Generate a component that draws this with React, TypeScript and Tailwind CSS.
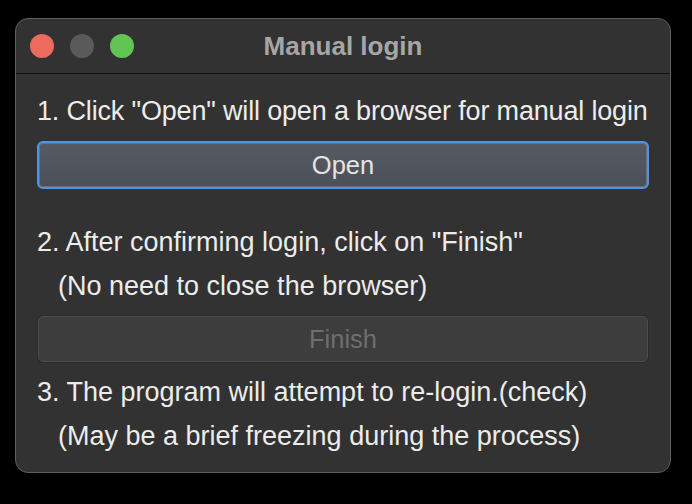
import React from "react";

export default function App() {
  const font = { fontFamily: '"Liberation Sans", Arial, sans-serif' };
  return (
    <div className="w-[692px] h-[504px] bg-black pt-[18px] pl-[15px]" style={font}>
      <div className="w-[656px] h-[455px] rounded-[13px] bg-[#323232] border border-[#5e5e5e] flex flex-col overflow-hidden">
        <div className="h-[55px] shrink-0 flex items-center relative border-b border-[#151515]">
          <div className="absolute left-[14px] top-[15px] flex gap-[16px]">
            <div className="w-[24px] h-[24px] rounded-full bg-[#ed6a5e]" />
            <div className="w-[24px] h-[24px] rounded-full bg-[#5a5a5a]" />
            <div className="w-[24px] h-[24px] rounded-full bg-[#61c554]" />
          </div>
          <div className="flex-1 text-center text-[#a6a6a6] font-bold text-[26px] leading-none">
            Manual login
          </div>
        </div>
        <div className="flex flex-col px-[21px] pt-[15px] text-[#ececec] text-[27px]">
          <div className="h-[44px] leading-[44px] whitespace-nowrap tracking-[-0.17px]">
            1. Click "Open" will open a browser for manual login
          </div>
          <div className="mt-[8px] h-[48px] rounded-[6px] border-[2.5px] border-[#4f94e6] bg-gradient-to-b from-[#565b63] to-[#4b5058] flex items-center justify-center shadow-[inset_0_0_0_1px_#6a6e75]">
            <span className="text-[#e4e4e4] text-[25.5px]">Open</span>
          </div>
          <div className="mt-[31px] h-[44px] leading-[44px] whitespace-nowrap">
            2. After confirming login, click on "Finish"
          </div>
          <div className="h-[44px] leading-[44px] whitespace-nowrap pl-[21px]">
            (No need to close the browser)
          </div>
          <div className="mt-[8px] mx-[1px] h-[46px] rounded-[5px] border border-[#4c4c4c] bg-[#3d3d3d] flex items-center justify-center shadow-[0_0_0_1px_#2a2a2a]">
            <span className="text-[#6e6e6e] text-[25.5px]">Finish</span>
          </div>
          <div className="mt-[8px] h-[44px] leading-[44px] whitespace-nowrap">
            3. The program will attempt to re-login.(check)
          </div>
          <div className="h-[44px] leading-[44px] whitespace-nowrap pl-[21px]">
            (May be a brief freezing during the process)
          </div>
        </div>
      </div>
    </div>
  );
}
